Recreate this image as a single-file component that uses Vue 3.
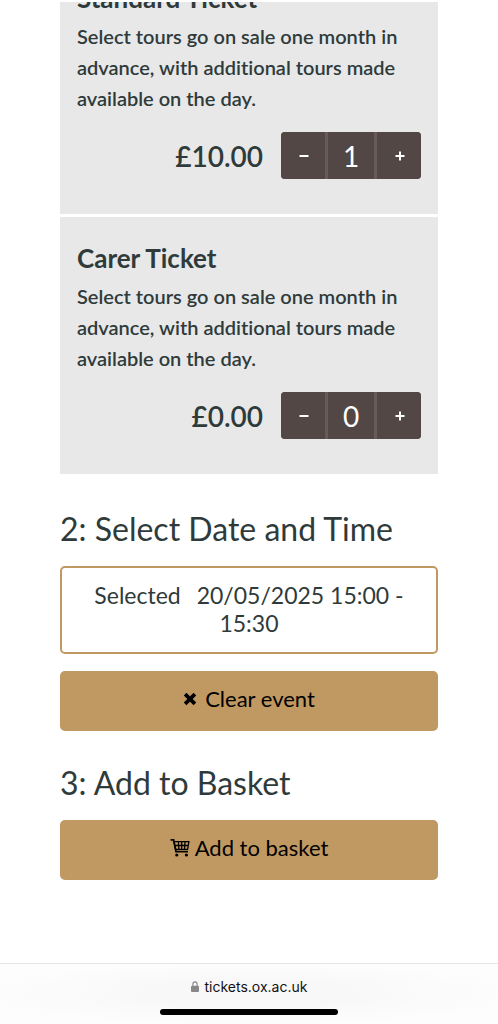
<script setup>
import { reactive } from 'vue'

const description =
  'Select tours go on sale one month in advance, with additional tours made available on the day.'

const tickets = reactive([
  { id: 'standard', name: 'Standard Ticket', price: '£10.00', quantity: 1 },
  { id: 'carer', name: 'Carer Ticket', price: '£0.00', quantity: 0 },
])

function change(ticket, amount) {
  ticket.quantity = Math.max(0, Number(ticket.quantity) + amount)
}
</script>

<template>
  <div class="screen">
    <main class="content">
      <section class="tickets" aria-label="Tickets">
        <article v-for="ticket in tickets" :key="ticket.id" class="card">
          <h3 class="card-title">{{ ticket.name }}</h3>
          <p class="card-text">{{ description }}</p>
          <div class="card-row">
            <label class="price" :for="ticket.id">{{ ticket.price }}</label>
            <div class="stepper">
              <button type="button" class="step" @click="change(ticket, -1)" :aria-label="'Remove one ' + ticket.name">
                <svg viewBox="0 0 10 10" class="step-icon"><path d="M.5 5h9" /></svg>
              </button>
              <input :id="ticket.id" v-model="ticket.quantity" class="quantity" type="text" inputmode="numeric" />
              <button type="button" class="step" @click="change(ticket, 1)" :aria-label="'Add one ' + ticket.name">
                <svg viewBox="0 0 10 10" class="step-icon"><path d="M.5 5h9M5 .5v9" /></svg>
              </button>
            </div>
          </div>
        </article>
      </section>

      <h2 class="heading">2: Select Date and Time</h2>
      <p class="selected"><span class="selected-label">Selected</span>20/05/2025 15:00 - 15:30</p>
      <button type="button" class="action clear">
        <svg class="clear-icon" viewBox="0 0 12 12" aria-hidden="true">
          <path d="M1.8 1.8l8.4 8.4M10.2 1.8l-8.4 8.4" />
        </svg>
        Clear event
      </button>

      <h2 class="heading">3: Add to Basket</h2>
      <button type="button" class="action add">
        <svg class="cart-icon" viewBox="0 0 20 19" aria-hidden="true">
          <path class="cart-line" d="M.6 1.8h3l2.4 11.8h12" />
          <path class="cart-grid" d="M4 3.7h14.9l-1.3 7.6H5.6zM4.6 7.5h13.6M8.4 3.7l.5 7.6M11.7 3.7v7.6M15 3.7l-.5 7.6" />
          <circle cx="6.8" cy="17" r="1.6" />
          <circle cx="16.4" cy="17" r="1.6" />
        </svg>
        Add to basket
      </button>
    </main>

    <footer class="browser-bar">
      <a class="address" href="#">
        <svg class="lock-icon" viewBox="0 0 8 11" aria-hidden="true">
          <path class="shackle" d="M1.9 5.2V3a2.1 2.1 0 0 1 4.2 0v2.2" />
          <rect y="4.8" width="8" height="6.2" rx="1" />
        </svg>
        tickets.ox.ac.uk
      </a>
      <div class="home-indicator"></div>
    </footer>
  </div>
</template>

<style>
body {
  margin: 0;
  background: #fff;
}
</style>

<style scoped>
.screen {
  box-sizing: border-box;
  display: flex;
  flex-direction: column;
  min-height: 100vh;
  padding-top: 2px;
  color: #2f3b3a;
  font-family: Lato, "Open Sans", sans-serif;
  font-variant-ligatures: none;
}

.content {
  flex: 1;
  padding: 0 60px;
}

.tickets {
  display: flex;
  flex-direction: column;
  gap: 3px;
  margin-bottom: 34px;
  overflow: hidden;
}

.card {
  padding: 24px 17px 35px;
  background: #e8e8e9;
}

.card:first-child {
  margin-top: -45px;
}

.card-title {
  margin: 0 0 6px;
  font-size: 26px;
  font-weight: 700;
  line-height: 34px;
}

.card-text {
  margin: 0 0 18px;
  font-size: 20px;
  font-weight: 600;
  line-height: 31px;
}

.card-row {
  display: flex;
  align-items: center;
  justify-content: flex-end;
  gap: 18px;
}

.price {
  font-size: 28px;
  font-weight: 600;
}

.stepper {
  display: flex;
  gap: 3px;
  height: 47px;
  border-radius: 4px;
  overflow: hidden;
  background: #675a59;
}

.step,
.quantity {
  box-sizing: border-box;
  margin: 0;
  padding: 0;
  border: 0;
  background: #524745;
  color: #fff;
}

.step {
  display: flex;
  align-items: center;
  justify-content: center;
  width: 44px;
  padding-left: 2px;
}

.step-icon {
  width: 10px;
  height: 10px;
  fill: none;
  stroke: #fff;
  stroke-width: 2;
}

.quantity {
  width: 46px;
  font: 400 28px Lato, sans-serif;
  text-align: center;
}

.heading {
  margin: 31px 0 16px;
  font-size: 32px;
  font-weight: 400;
  line-height: 42px;
}

.selected {
  margin: 0 0 17px;
  padding: 13px 30px 15px;
  border: 2px solid #c09962;
  border-radius: 5px;
  font-size: 23px;
  line-height: 28px;
  text-align: center;
}

.selected-label {
  margin-right: 16px;
}

.action {
  display: flex;
  align-items: center;
  justify-content: center;
  width: 100%;
  height: 60px;
  padding: 0 0 5px;
  border: 0;
  border-radius: 5px;
  background: #c09962;
  color: #000;
  font: 400 22px Lato, sans-serif;
}

.clear {
  gap: 8px;
}

.add {
  gap: 5px;
}

.clear-icon {
  width: 14px;
  height: 14px;
  fill: none;
  stroke: #000;
  stroke-width: 3.2;
}

.cart-icon {
  width: 20px;
  height: 19px;
}

.cart-line,
.cart-grid {
  fill: none;
  stroke: #000;
  stroke-width: 1.8;
}

.cart-grid {
  stroke-width: 1.3;
}

.browser-bar {
  display: flex;
  flex-direction: column;
  align-items: center;
  gap: 13px;
  padding: 13px 0 9px;
  border-top: 1px solid #e4e4e4;
  background: radial-gradient(ellipse at center, #f8f8f8 30%, #fdfdfd 75%);
}

.address {
  display: flex;
  align-items: center;
  gap: 6px;
  color: #111;
  font: 400 14px/19px Inter, sans-serif;
  text-decoration: none;
}

.lock-icon {
  width: 8px;
  height: 11px;
  fill: #888;
}

.shackle {
  fill: none;
  stroke: #888;
  stroke-width: 1.1;
}

.home-indicator {
  width: 178px;
  height: 6px;
  border-radius: 3px;
  background: #000;
}
</style>
